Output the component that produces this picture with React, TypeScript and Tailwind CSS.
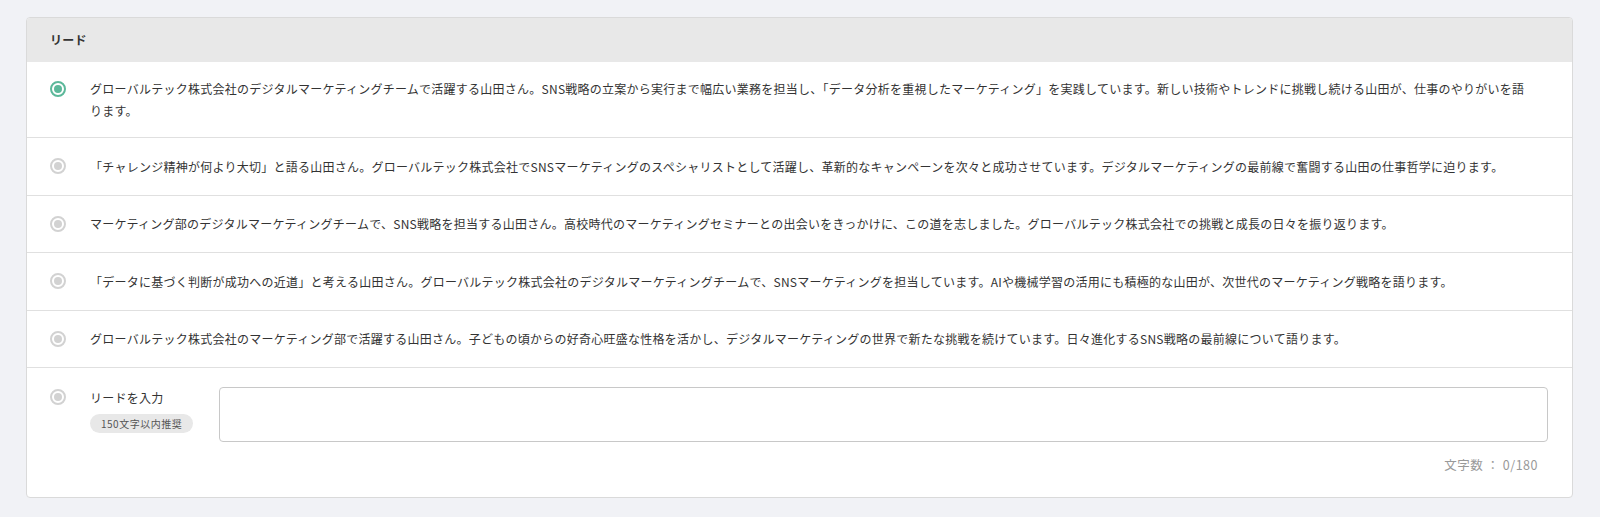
import { useState } from "react";

const leads = [
  "グローバルテック株式会社のデジタルマーケティングチームで活躍する山田さん。SNS戦略の立案から実行まで幅広い業務を担当し、「データ分析を重視したマーケティング」を実践しています。新しい技術やトレンドに挑戦し続ける山田が、仕事のやりがいを語ります。",
  "「チャレンジ精神が何より大切」と語る山田さん。グローバルテック株式会社でSNSマーケティングのスペシャリストとして活躍し、革新的なキャンペーンを次々と成功させています。デジタルマーケティングの最前線で奮闘する山田の仕事哲学に迫ります。",
  "マーケティング部のデジタルマーケティングチームで、SNS戦略を担当する山田さん。高校時代のマーケティングセミナーとの出会いをきっかけに、この道を志しました。グローバルテック株式会社での挑戦と成長の日々を振り返ります。",
  "「データに基づく判断が成功への近道」と考える山田さん。グローバルテック株式会社のデジタルマーケティングチームで、SNSマーケティングを担当しています。AIや機械学習の活用にも積極的な山田が、次世代のマーケティング戦略を語ります。",
  "グローバルテック株式会社のマーケティング部で活躍する山田さん。子どもの頃からの好奇心旺盛な性格を活かし、デジタルマーケティングの世界で新たな挑戦を続けています。日々進化するSNS戦略の最前線について語ります。",
];

function Radio({ checked }: { checked: boolean }) {
  return (
    <span
      className={
        checked
          ? "flex w-4 h-4 items-center justify-center rounded-full border-2 border-[#5cb89a] bg-white"
          : "flex w-4 h-4 items-center justify-center rounded-full border-2 border-[#d2d2d2] bg-white"
      }
    >
      <span
        className={
          checked
            ? "block w-2 h-2 rounded-full bg-[#5cb89a]"
            : "block w-2 h-2 rounded-full bg-[#d2d2d2]"
        }
      />
    </span>
  );
}

export default function App() {
  const [selected, setSelected] = useState(0);
  const [custom, setCustom] = useState("");

  return (
    <div
      className="min-h-[517px] bg-[#f1f2f6] pt-[17px] pl-[26px] pr-[27px] text-[#333]"
      style={{ fontFamily: '"Noto Sans CJK JP", "Noto Sans", sans-serif' }}
    >
      <section className="bg-white border border-[#dadada] rounded-[4px] overflow-hidden">
        <div className="h-[44px] bg-[#e8e8e8] flex items-center px-[23px]">
          <h2 className="text-[12px] font-bold tracking-[0.25px] text-[#333]">リード</h2>
        </div>

        {leads.map((text, i) => (
          <div
            key={i}
            className="flex items-center min-h-[57.5px] py-4 pl-[23px] pr-[42px] border-b border-[#e0e0e0] cursor-pointer"
            onClick={() => setSelected(i)}
          >
            <div className="flex items-start">
              <div className="h-[21.6px] flex items-center shrink-0">
                <Radio checked={selected === i} />
              </div>
              <p className="ml-6 text-[12px] leading-[21.6px] tracking-[0.25px] text-[#333]">
                {text}
              </p>
            </div>
          </div>
        ))}

        <div className="pt-[19px] pb-[22px] pl-[23px] pr-6">
          <div className="flex items-start">
            <div
              className="h-[19px] flex items-center shrink-0 cursor-pointer"
              onClick={() => setSelected(5)}
            >
              <Radio checked={selected === 5} />
            </div>
            <div className="ml-6 w-[105px] shrink-0">
              <p className="text-[12px] leading-[21.6px] tracking-[0.25px] text-[#333]">
                リードを入力
              </p>
              <span className="mt-[1.5px] inline-flex h-[19px] items-center rounded-full bg-[#e8e8e8] px-[11px] text-[10px] tracking-[0.5px] text-[#555]">
                150文字以内推奨
              </span>
            </div>
            <textarea
              value={custom}
              onChange={(e) => setCustom(e.target.value)}
              onFocus={() => setSelected(5)}
              className="ml-6 flex-1 h-[55px] resize-none rounded-[4px] border border-[#c8c8c8] px-3 py-2 text-[12px] outline-none"
            />
          </div>
          <p className="mt-[13px] pr-[10px] text-right text-[12.5px] leading-[20px] tracking-[0.5px] text-[#999]">
            文字数 ： {custom.length}/180
          </p>
        </div>
      </section>
    </div>
  );
}
